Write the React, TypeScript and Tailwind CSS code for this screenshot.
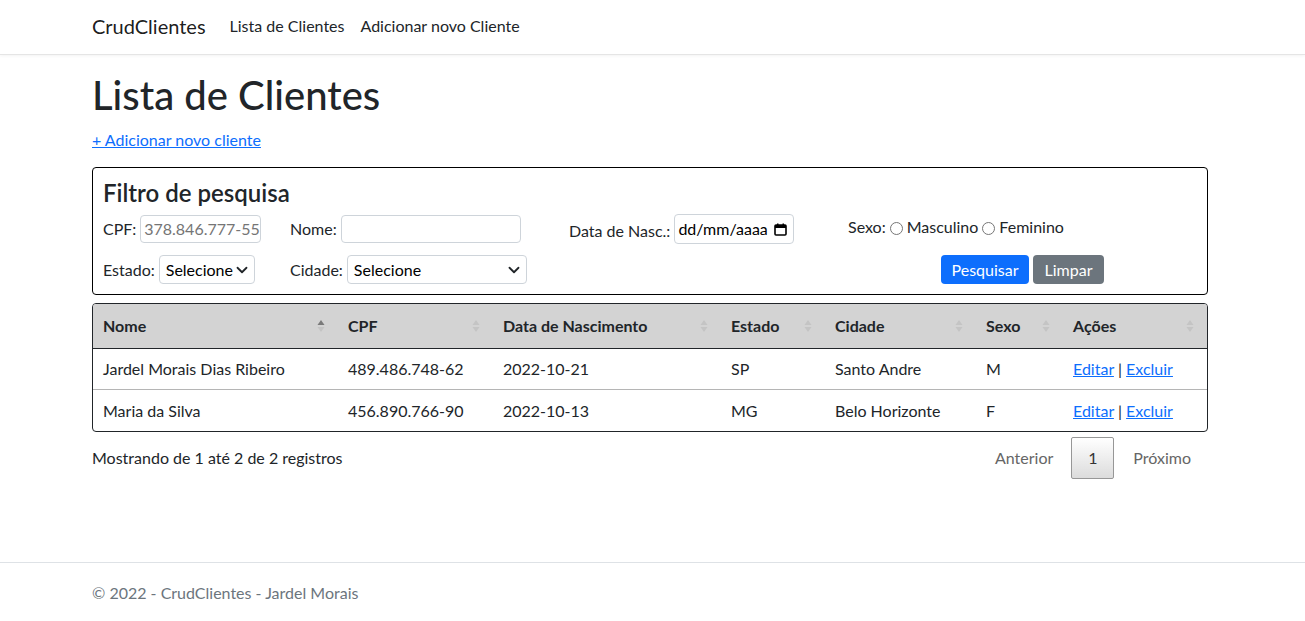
import React from "react";

const clientes = [
  { nome: "Jardel Morais Dias Ribeiro", cpf: "489.486.748-62", nasc: "2022-10-21", estado: "SP", cidade: "Santo Andre", sexo: "M" },
  { nome: "Maria da Silva", cpf: "456.890.766-90", nasc: "2022-10-13", estado: "MG", cidade: "Belo Horizonte", sexo: "F" },
];

const colunas = ["Nome", "CPF", "Data de Nascimento", "Estado", "Cidade", "Sexo", "Ações"];

const SortIcon = ({ active }: { active?: boolean }) => (
  <svg width="8" height="14" viewBox="0 0 8 14" className="shrink-0">
    <path d="M4 1 L7.5 6 L0.5 6 Z" fill={active ? "#7a7a7a" : "#c4c4c4"} />
    <path d="M4 13 L7.5 8 L0.5 8 Z" fill="#c4c4c4" />
  </svg>
);

const Chevron = () => (
  <svg width="12" height="12" viewBox="0 0 16 16" className="shrink-0">
    <path d="M2 5l6 6 6-6" fill="none" stroke="#212529" strokeWidth="2.4" strokeLinecap="round" strokeLinejoin="round" />
  </svg>
);

const Select = ({ width }: { width: string }) => (
  <div className={`${width} h-[29px] flex items-center justify-between rounded-[4px] border border-[#ced4da] pl-[6px] pr-[6px] text-[16px] text-black`}>
    <span>Selecione</span>
    <Chevron />
  </div>
);

const Radio = () => (
  <span className="inline-block w-[13px] h-[13px] rounded-full border border-[#767676] bg-white mx-[4px] translate-y-[1px]" />
);

const App = () => {
  return (
    <div className="min-h-[621px] flex flex-col bg-white text-[#212529] text-[16px]" style={{ fontFamily: "Lato, 'Noto Sans', sans-serif" }}>
      <nav className="h-[55px] border-b border-[#e5e5e5] shadow-[0_1px_3px_rgba(0,0,0,0.05)] bg-white">
        <div className="ml-[92px] w-[1116px] h-full flex items-center -translate-y-[1px]">
          <a className="text-[20px] text-black/90 mr-[16px]">CrudClientes</a>
          <a className="px-[8px] text-[#212529]">Lista de Clientes</a>
          <a className="px-[8px] text-[#212529]">Adicionar novo Cliente</a>
        </div>
      </nav>

      <main className="ml-[92px] w-[1116px] pt-[16px]">
        <h1 className="text-[40px] leading-[48px] font-medium mb-[9px]">Lista de Clientes</h1>
        <p className="mb-[15px] leading-[24px]">
          <a className="text-[#0d6efd] underline">+ Adicionar novo cliente</a>
        </p>

        <div className="border border-black rounded-[4px] px-[10px] pt-[10px] pb-[9px]">
          <h4 className="text-[24px] leading-[30px] font-semibold">Filtro de pesquisa</h4>
          <div className="mt-[6px] h-[30px] flex items-center">
            <div className="w-[187px] flex items-center">
              <label className="mr-[4px]">CPF:</label>
              <div className="w-[121px] h-[28px] flex items-center rounded-[4px] border border-[#ced4da] px-[3px] text-[#757575] whitespace-nowrap overflow-hidden">378.846.777-55</div>
            </div>
            <div className="w-[279px] flex items-center">
              <label className="mr-[4px]">Nome:</label>
              <div className="w-[180px] h-[28px] rounded-[4px] border border-[#ced4da]" />
            </div>
            <div className="w-[279px] flex items-center">
              <label className="mr-[4px] translate-y-[2px]">Data de Nasc.:</label>
              <div className="w-[120px] h-[30px] flex items-center justify-between rounded-[4px] border border-[#ced4da] pl-[3px] pr-[6px] text-black">
                <span>dd/mm/aaaa</span>
                <svg width="13" height="13" viewBox="0 0 13 13">
                  <rect x="1" y="2" width="11" height="10" rx="1" fill="none" stroke="#000" strokeWidth="1.6" />
                  <rect x="1" y="2" width="11" height="3" fill="#000" />
                  <rect x="3" y="0.5" width="1.5" height="2.5" fill="#000" />
                  <rect x="8.5" y="0.5" width="1.5" height="2.5" fill="#000" />
                </svg>
              </div>
            </div>
            <div className="flex-1 flex items-center -translate-y-[2px]">
              <span>Sexo:</span>
              <Radio />
              <span>Masculino</span>
              <Radio />
              <span>Feminino</span>
            </div>
          </div>
          <div className="mt-[10px] h-[31px] flex items-center">
            <div className="w-[187px] flex items-center">
              <label className="mr-[4px]">Estado:</label>
              <Select width="w-[96px]" />
            </div>
            <div className="w-[279px] flex items-center">
              <label className="mr-[4px]">Cidade:</label>
              <Select width="w-[180px]" />
            </div>
            <div className="w-[279px]" />
            <div className="flex-1 flex justify-center gap-[4px]">
              <button className="h-[29px] w-[88px] rounded-[4px] bg-[#0d6efd] text-white">Pesquisar</button>
              <button className="h-[29px] w-[71px] rounded-[4px] bg-[#6c757d] text-white">Limpar</button>
            </div>
          </div>
        </div>

        <div className="mt-[8px] border border-[#212529] rounded-[4px] overflow-hidden">
          <div className="grid grid-cols-[245px_155px_228px_104px_151px_87px_1fr] h-[45px] bg-[#d3d3d3] border-b border-[#212529] font-bold">
            {colunas.map((c, i) => (
              <div key={c} className="flex items-center justify-between pl-[10px] pr-[13px]">
                <span>{c}</span>
                <SortIcon active={i === 0} />
              </div>
            ))}
          </div>
          {clientes.map((c, i) => (
            <div
              key={c.cpf}
              className={`grid grid-cols-[245px_155px_228px_104px_151px_87px_1fr] h-[41px] items-center ${i === 0 ? "border-b border-[#b5b5b5]" : ""}`}
            >
              <div className="pl-[10px]">{c.nome}</div>
              <div className="pl-[10px]">{c.cpf}</div>
              <div className="pl-[10px]">{c.nasc}</div>
              <div className="pl-[10px]">{c.estado}</div>
              <div className="pl-[10px]">{c.cidade}</div>
              <div className="pl-[10px]">{c.sexo}</div>
              <div className="pl-[10px]">
                <a className="text-[#0d6efd] underline">Editar</a> | <a className="text-[#0d6efd] underline">Excluir</a>
              </div>
            </div>
          ))}
        </div>

        <div className="mt-[4px] h-[43px] flex items-center justify-between">
          <div>Mostrando de 1 até 2 de 2 registros</div>
          <div className="flex items-center text-[#666]">
            <span className="px-[16px]">Anterior</span>
            <span className="ml-[2px] w-[43px] h-[42px] flex items-center justify-center rounded-[2px] border border-[#979797] bg-gradient-to-b from-white to-[#dcdcdc] text-[#333]">1</span>
            <span className="ml-[2px] px-[17px]">Próximo</span>
          </div>
        </div>
      </main>

      <footer className="mt-auto h-[59px] border-t border-[#dee2e6] text-[#6c757d] leading-[59px]">
        <div className="ml-[92px]">© 2022 - CrudClientes - Jardel Morais</div>
      </footer>
    </div>
  );
};

export default App;
